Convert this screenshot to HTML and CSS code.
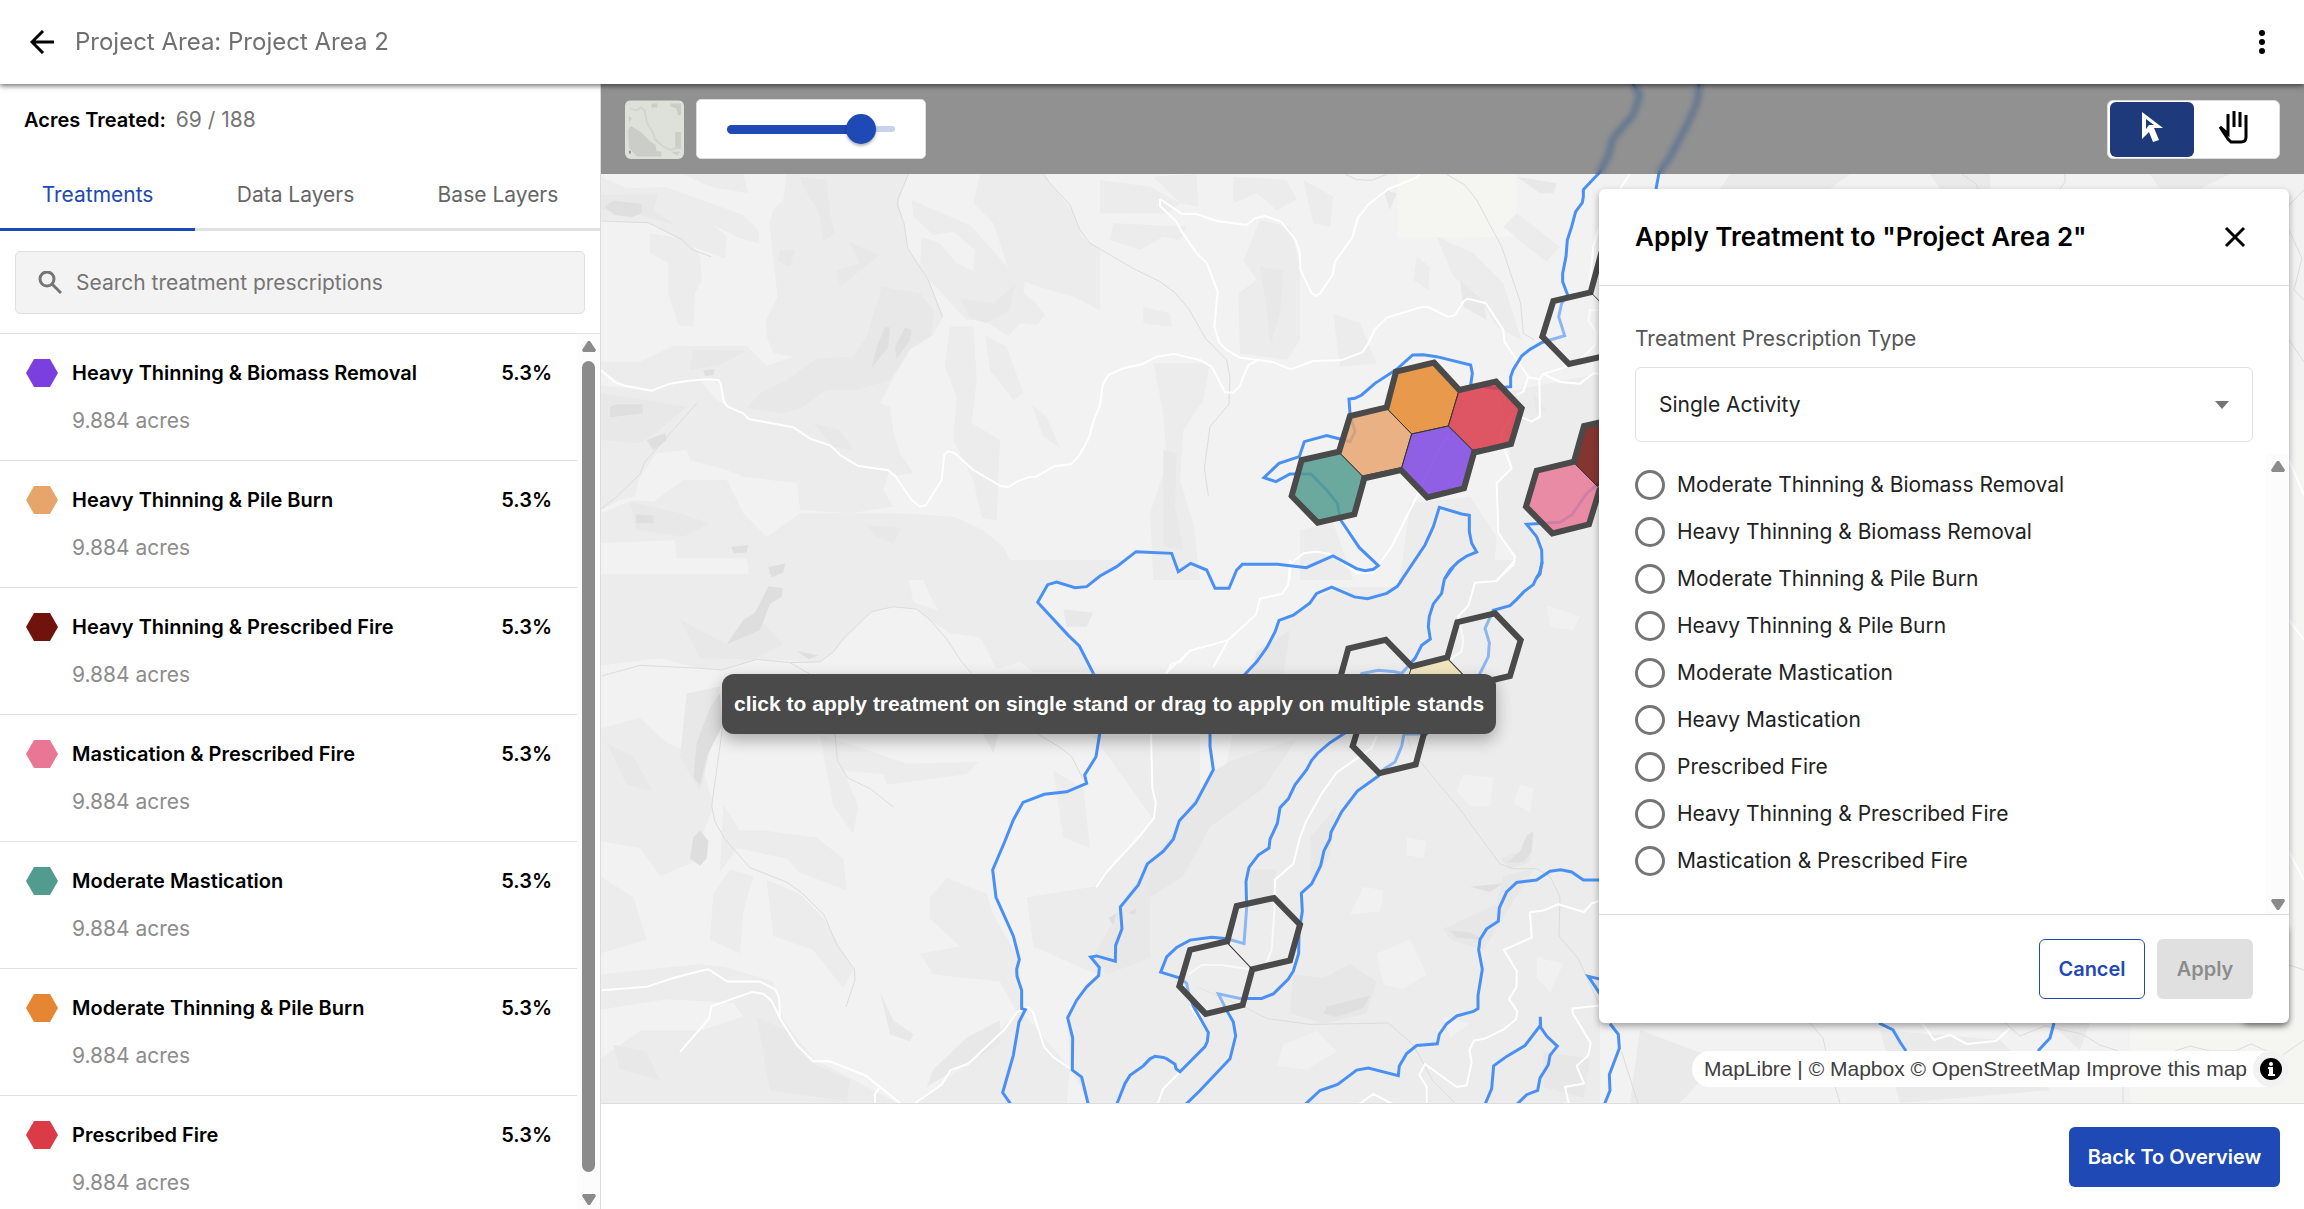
FILE: index.html
```html
<!DOCTYPE html>
<html lang="en">
<head>
<meta charset="utf-8">
<meta name="viewport" content="width=device-width, initial-scale=1">
<title>Project Area 2</title>
<link rel="stylesheet" href="styles.css">
</head>
<body>
<div class="app">
  <header class="topbar">
    <button class="icon-btn" type="button" aria-label="Back"><svg width="24" height="24" viewBox="0 0 24 24" fill="none" stroke="#000" stroke-width="3"><path d="M24 12H2M13 1 2 12l11 11"/></svg></button>
    <h1 class="topbar-title">Project Area: Project Area 2</h1>
    <button class="icon-btn" type="button" aria-label="More options"><svg width="24" height="24" viewBox="0 0 24 24"><circle cx="12" cy="3" r="3"/><circle cx="12" cy="12" r="3"/><circle cx="12" cy="21" r="3"/></svg></button>
  </header>

  <aside class="sidebar">
    <p class="acres"><strong>Acres Treated:</strong> <span>69 / 188</span></p>
    <nav class="tabs">
      <button class="tab tab-active" type="button">Treatments</button>
      <button class="tab" type="button">Data Layers</button>
      <button class="tab" type="button">Base Layers</button>
    </nav>
    <div class="search-area">
      <label class="search">
        <svg width="24" height="24" viewBox="0 0 24 24" fill="none" stroke="#757575" stroke-width="3"><circle cx="9" cy="8" r="7"/><path d="m14 13 9 9"/></svg>
        <input type="text" placeholder="Search treatment prescriptions" aria-label="Search treatment prescriptions">
      </label>
    </div>
    <div class="list-area">
      <ul class="list">
        <li class="item"><svg class="hex purple" viewBox="0 0 32 28"><path d="M8 0h16l8 14-8 14H8L0 14z"/></svg><strong>Heavy Thinning &amp; Biomass Removal</strong><b>5.3%</b><span>9.884 acres</span></li>
        <li class="item"><svg class="hex peach" viewBox="0 0 32 28"><path d="M8 0h16l8 14-8 14H8L0 14z"/></svg><strong>Heavy Thinning &amp; Pile Burn</strong><b>5.3%</b><span>9.884 acres</span></li>
        <li class="item"><svg class="hex maroon" viewBox="0 0 32 28"><path d="M8 0h16l8 14-8 14H8L0 14z"/></svg><strong>Heavy Thinning &amp; Prescribed Fire</strong><b>5.3%</b><span>9.884 acres</span></li>
        <li class="item"><svg class="hex pink" viewBox="0 0 32 28"><path d="M8 0h16l8 14-8 14H8L0 14z"/></svg><strong>Mastication &amp; Prescribed Fire</strong><b>5.3%</b><span>9.884 acres</span></li>
        <li class="item"><svg class="hex teal" viewBox="0 0 32 28"><path d="M8 0h16l8 14-8 14H8L0 14z"/></svg><strong>Moderate Mastication</strong><b>5.3%</b><span>9.884 acres</span></li>
        <li class="item"><svg class="hex orange" viewBox="0 0 32 28"><path d="M8 0h16l8 14-8 14H8L0 14z"/></svg><strong>Moderate Thinning &amp; Pile Burn</strong><b>5.3%</b><span>9.884 acres</span></li>
        <li class="item"><svg class="hex red" viewBox="0 0 32 28"><path d="M8 0h16l8 14-8 14H8L0 14z"/></svg><strong>Prescribed Fire</strong><b>5.3%</b><span>9.884 acres</span></li>
      </ul>
      <div class="scrollbar">
        <svg width="14" height="12" viewBox="0 0 14 12"><path d="M6 1h2l6 9-1 2H1l-1-2z"/></svg>
        <div class="scroll-thumb"></div>
        <svg width="14" height="12" viewBox="0 0 14 12"><path d="M6 11h2l6-9-1-2H1L0 2z"/></svg>
      </div>
    </div>
  </aside>

  <main class="map">
    <svg class="map-canvas" viewBox="601 84 1703 1019" preserveAspectRatio="xMinYMin slice" aria-hidden="true">
      <rect x="601" y="84" width="1703" height="1019" fill="#f2f2f2"/>
      <!-- hillshade -->
      <g transform="translate(600 80) scale(.33333)">
        <g fill="#ececec">
          <path d="M3 290 80 325 200 322 290 355 430 405 475 450 478 490 420 475 340 435 380 470 375 535 280 500 145 428 3 423z"/>
          <path d="M250 283H430L445 340 330 320z"/>
          <path d="M560 283H925L895 365 912 430 923 505 985 600 1030 710 1000 765 930 810 880 895 840 970 870 980 880 1060 900 1120 940 1180 885 1187 865 1171 772 1157 692 1097 580 1042 446 1017 383 980 362 910 320 898 155 932 75 917 3 870V845L120 845 220 798H440L500 858 580 830 520 820 500 770 498 720 518 680 533 650 508 430 520 390 550 360z"/>
          <path d="M1140 283H1332L1420 400 1445 470 1500 510V690L1420 650 1330 625 1275 605 1270 640 1305 665 1335 705 1310 735 1260 730 1225 768 1150 720 1100 720 960 570 965 470 1020 490 1070 550 1120 572 1125 510 1060 455 1000 465 940 410 935 360 980 380 1110 435 1170 500 1225 565 1180 430 1120 370z"/>
          <path d="M150 460 265 480 300 530 305 600 285 640 280 740 235 735 205 640V550L150 520z"/>
          <path d="M3 917 155 932 300 900 350 960 430 1000 580 1042 690 1097 770 1157 870 1171 850 1230 880 1280 750 1300 600 1290 590 1210 430 1190 380 1170 270 1140 260 1110 170 1120 115 1200 105 1250 60 1260 3 1290z"/>
          <path d="M100 1260 160 1265 250 1200 380 1200 430 1300 500 1370 600 1300 900 1300 1060 1310 1150 1350 1210 1400 1260 1500H450L440 1435 230 1435 225 1380 3 1390V1300z"/>
          <path d="M1050 740 1120 740 1130 900 1115 1030 1200 1080 1190 1320 1145 1315 1120 1200 1060 1080 1070 950 1035 860z"/>
          <path d="M1155 765 1220 800 1270 940 1240 960 1170 870zM1295 975 1340 1010 1380 1105 1330 1070z"/>
        </g>
        <g fill="#e8e8e8">
          <path d="M3 345 175 343 160 390 225 435 100 400 3 390zM600 290 680 300 690 400 705 460 670 483 655 390 615 330zM845 620 960 640 1000 690 995 765 930 805 870 900 770 930 680 930 600 985 550 1000 440 985 480 940 560 900 650 835 760 830 800 770zM1080 655 1180 670 1245 615 1230 690 1160 730 1110 715zM280 810 440 812 360 855 270 870zM745 485 840 525 720 620 710 570 780 550z"/>
          <path d="M540 510 585 510 570 560 535 545zM3 940 140 960 260 980 190 1040 120 1090 3 1080zM90 1265 240 1300 330 1330 250 1370 110 1350zM640 1030 720 1050 760 1110 700 1100zM800 1335 905 1345 880 1390 830 1370z"/>
        </g>
        <g fill="#dfdfdf">
          <path d="M12 380 40 362 125 372 125 400 95 412 45 405zM30 980 50 973H128V1000L30 1012zM855 742H870L865 800 815 865 830 800zM915 742 935 750 930 780 890 838 885 800zM140 1080 195 1060 200 1080 160 1110zM108 1303 160 1307V1330H108zM395 1400 445 1395 440 1418 400 1420zM505 1480 555 1450 550 1470 515 1495zM310 870 345 868 340 885 315 888z"/>
        </g>
      </g>
      <g transform="translate(1100 80) scale(.33333)">
        <path d="M893 283H1251V470L893 473z" fill="#f5f5f2"/>
        <g fill="#ececec">
          <path d="M0 300 150 320 240 370 200 400H0zM160 290 290 283 295 380 240 370zM400 290 560 300 590 360 530 390 470 340 400 370zM40 430 260 440 240 480 190 470 120 510 30 480zM480 420 570 440 600 560 600 780 560 840 420 820 415 640 470 600 430 540zM610 300 700 350 690 440 640 430zM1250 400 1380 500 1340 545 1280 500 1210 440zM1010 470 1120 520 1210 610 1265 780 1190 740 1130 640 1060 590zM950 530 990 560 985 630 940 600zM130 680 210 700 215 740 130 730zM160 850H330L310 960 250 1050 240 1200 280 1330 300 1500H160L150 1300 200 1150 190 1000zM700 700 780 730 830 850 720 860zM1200 940 1500 880V1500H1190L1245 1430 1190 1360 1190 1210 1235 1165zM600 1350 700 1330 760 1500H600zM930 1270 1110 1250 1190 1370 1180 1500H900z"/>
        </g>
        <g fill="#e8e8e8"><path d="M480 560 550 570 540 700 510 800 500 680zM1250 290 1370 310 1360 340 1320 340zM190 1110 230 1120 225 1280 250 1410 190 1400zM1080 600 1150 660 1160 720 1090 680zM1300 940 1340 990 1310 1000zM850 330 890 340 870 390z"/></g>
      </g>
      <g transform="translate(700 560) scale(.33333 .3513)">
        <g fill="#ececec">
          <path d="M-300 40H460L480 50 620 30 640 120 740 150 760 215 690 170 650 140 580 133 515 147 400 262 360 290 170 283 65 313 0 308-120 280-300 300zM640 0H1280L1160 78 1057 62 1012 121 1138 245 1180 320H1000L960 290 890 310 840 220 760 210 700 120zM360 500 470 530 620 580 835 575 800 610 560 640 550 610 430 600 475 700 460 780 400 700zM70 695 120 770 190 770 350 790 430 850 440 940 300 890 260 850 110 820 60 890zM90 880 160 900 130 1000 120 1120 30 1080 40 950zM200 910 300 950 370 1020 460 1165 430 1220 340 1110 220 1070zM0 1150 80 1160 220 1200 250 1310 340 1420 600 1550H-300V1420L-180 1340 0 1340 130 1300 100 1260-100 1250-300 1280V1180zM690 960 740 905 860 950 880 1010 960 1140 960 1280 1110 1447 1100 1550H640L800 1434 950 1288 900 1200 700 1180 660 1120 780 1100 690 1020zM1060 600 1150 650 1170 820 1090 790zM1180 500H1500V1550H1170L1110 1447 1100 1300 1190 1180 1000 1100 980 960 1180 930 1360 740z"/>
          <path d="M-300 480-180 450-100 520 0 560 40 700-20 860-120 900-180 820-300 800zM-300 900-200 960-160 1080-300 1120z"/>
        </g>
        <g fill="#e8e8e8"><path d="M-60 170 80 240 180 170 250 240 160 283 0 280zM1500 740 1420 800 1340 870 1260 990 1180 1130 1220 1180 1500 1080zM900 1310 800 1360 700 1450 680 1500 820 1420 900 1380zM170 1300 260 1340 330 1430 450 1480 440 1540 210 1510zM540 1230 580 1310 640 1350 630 1370 570 1350zM-40 380 60 360 40 500 0 660-60 560zM840 480 900 480 880 550zM1090 140 1180 150 1160 190 1100 190zM-280 520-200 560-140 660-220 640zM-260 1380-160 1400-120 1480-240 1450z"/></g>
        <g fill="#dedede"><path d="M205 75 248 80 245 105 210 125 180 200 80 240 130 170 165 150zM205 20 255 10 250 35 215 50zM290 258 355 272 325 282zM60 380 68 470 20 560 0 640-20 620-10 520 30 420zM-20 790 0 770 25 800 20 850 0 870-30 850zM1225 1020 1250 1005 1240 1040zM1285 1005 1310 990 1305 1010z"/></g>
      </g>
      <g transform="translate(1150 560) scale(.33333 .3513)">
        <path d="M800 0H1350V1550H0V860L200 700 290 323 400 170 560 77 740 77z" fill="#ececec"/>
        <g fill="#f1f1f1"><path d="M940 610 1030 620 1020 700 960 700 920 660zM1110 640 1150 650 1140 720 1090 690zM640 930 700 940 690 1000 600 1010zM680 1120 780 1080 830 1180 760 1220 700 1210zM400 1380 500 1340 560 1400 470 1450 380 1440zM1190 130 1290 160 1270 200 1200 190zM770 790 830 800 820 850 770 840zM880 1300 960 1320 900 1360zM1160 1130 1240 1150 1200 1230 1160 1190z"/></g>
        <g fill="#e7e7e7"><path d="M320 260 420 200 400 330 300 330zM250 570 440 510 340 650 180 760 100 900 0 960V870L90 742 190 600zM300 880 380 880 360 1000 300 1000zM480 790 560 700 540 840 480 940zM880 1050 1040 980 1060 900 1150 880 1000 1110 900 1080zM430 1180 520 1190 600 1150 680 1200 650 1290 520 1320 420 1290zM1050 850 1110 830 1150 770 1140 860 1080 880zM1180 1400 1320 1420 1300 1530 1180 1500z"/></g>
        <path d="M1130 785 1150 772 1145 830 1120 860 1070 862 1110 830zM530 1272 660 1240 640 1275 560 1300 520 1292zM960 930 1060 920 1020 945zM900 1055 960 1060 1000 1080 920 1075z" fill="#dfdfdf"/>
      </g>
      <path d="M2130 1023H2304V1103H2130zM2289 400H2304V1023H2289z" fill="#f5f5f2"/>
      <path d="M1730 174H1850L1830 189H1720zM1930 174H1990V189H1940zM2150 174H2230L2200 189H2160zM1640 1030 1720 1060 1680 1103H1630zM1880 1030 2000 1040 2050 1090 1900 1103zM2050 1023H2090L2080 1050z" fill="#eaeaea"/>

      <!-- trails -->
      <g class="trail">
        <path transform="translate(600 80) scale(.33333)" d="M3 423 145 428 245 478 278 510 333 530M925 283 895 355 892 375 912 430 923 505 985 600 1027 710M1332 283 1350 310 1410 375 1440 450 1470 490 1500 507M290 970 135 1145 120 1182 50 1250 3 1287"/>
        <path transform="translate(1100 80) scale(.33333)" d="M0 507 95 563 180 605 225 638 265 685 318 777 380 840 390 890 387 972 330 1040 313 1165 325 1247M737 283 770 299 815 301 860 283M1040 283 1095 315 1130 360 1205 500 1262 670 1270 760 1303 780"/>
        <path transform="translate(700 560) scale(.33333 .3513)" d="M-295 330-180 300 0 308 65 313 170 283 270 292 360 290 400 262 430 222 515 147 580 133 650 140 690 170 740 225 785 290 815 323M270 292 330 325M68 475 35 700 45 745 75 795 150 876 260 917 305 947 372 1010 410 1095 463 1165 465 1195 438 1272M405 495 412 570 443 620 512 652 580 703M1012 495 1075 530 1115 560 1150 625"/>
        <path transform="translate(1150 560) scale(.33333 .3513)" d="M770 500 790 550 930 710 1050 865 1090 879 1160 879 1200 900 1230 960 1227 1070 1285 1135 1347 1265M140 1215 280 1270 350 1305 480 1322 715 1318 790 1380 850 1485 920 1550M1415 1400 1465 1550"/>
        <path d="M1810 1023 1823 1038 1830 1070 1840 1103M2005 1023 2020 1036 2045 1026 2082 1034 2100 1045 2118 1051M2175 1051 2190 1046 2210 1051 2235 1051 2251 1044 2280 1057 2304 1040M2123 1087V1103M2289 205 2304 190M2289 340 2304 362M2289 965 2304 970M2289 230 2302 258 2294 290 2304 300M1962 174 1976 184 1978 189M2065 174V182L2060 189"/>
      </g>
      <!-- roads -->
      <g class="road">
        <path transform="translate(600 80) scale(.33333)" d="M3 870 45 907 75 917 155 932 210 911 265 902 320 898 355 900 362 910 371 965 383 980 430 1000 446 1017 580 1042 632 1077 692 1097 720 1125 772 1157 865 1171 885 1187 935 1260 960 1280 978 1275 1025 1200 1033 1125 1043 1114 1063 1119 1120 1170 1200 1217 1225 1222 1250 1205 1285 1192 1308 1190 1365 1158 1413 1153 1437 1128 1467 1073 1480 1025 1500 975"/>
        <path transform="translate(1100 80) scale(.33333)" d="M0 975 8 915 25 885 70 865 128 852 170 830 222 822 300 840 335 860 375 937 400 938 418 920 445 855 470 843M180 357 180 378 230 425 245 455 290 520 320 548 353 635 343 740 358 788 380 810 420 833 515 845 573 868 640 843 722 841 787 817 805 790 825 748 860 713 965 681 985 681 1045 711 1065 705 1090 665 1103 656 1158 670 1210 750 1213 785 1285 890 1270 935 1250 945M180 357 245 401 290 402 350 423 440 435 465 415 495 408 543 425 587 480 600 520 601 568 635 640 648 648 660 640 698 585 705 545 757 472 773 415 805 373 865 327 950 293 960 283M1500 690 1470 690 1465 720 1487 755 1485 795 1430 850 1330 882 1380 906 1440 911 1480 880 1500 882M1285 892 1318 898 1320 1010 1295 1025 1240 1000 1200 1070 1235 1165 1190 1210 1195 1360 1245 1430 1240 1455 1190 1500M1328 882 1318 900M1050 1060 1010 1120 950 1250 875 1400 835 1455 820 1480 770 1478 690 1422 650 1415 610 1420 572 1452 568 1500M1497 440 1480 500 1470 600"/>
        <path transform="translate(700 560) scale(.33333 .3513)" d="M-295 1225-160 1215-80 1190 0 1170 25 1165 82 1200 180 1200 225 1222 237 1245 240 1305 290 1380 340 1427 390 1427 498 1468 605 1550M-60 1400 0 1335 27 1305 35 1270 155 1230 190 1235 215 1255 240 1305M540 1500 525 1520V1550M640 1550 725 1493 752 1452 805 1434 915 1335 950 1288 985 1273 1000 1290 1032 1385 1060 1415 1110 1447M1353 495 1357 650 1367 690 1362 735 1320 785 1220 888 1188 932M1353 495 1370 400 1400 320 1415 295 1440 290 1470 258 1500 250"/>
        <path transform="translate(1150 560) scale(.33333 .3513)" d="M420 0 415 70 395 97 330 110 318 155 235 228 120 258 50 320M235 228 190 305M680 500 665 535 560 605 515 665 468 745 450 790 430 865 375 910 373 1000 365 1110 350 1145M1095 0 1040 60 975 65 955 130 925 160 940 230 935 260 890 290M115 1180 155 1153 215 1153 300 1165M1350 970 1325 978 1302 1002 1225 980 1180 998 1140 1003 1145 1075 1062 1110 1100 1170 1100 1215 1077 1250 1102 1285 1098 1307 1060 1337 1003 1363 972 1368 958 1395 965 1430 950 1495 920 1500 825 1435 808 1465 830 1500V1550M1350 1268 1268 1277V1290L1322 1375 1315 1410 1280 1440 1302 1490 1245 1500 1257 1550M90 1457 40 1505 22 1550M625 1550 670 1520 730 1550M175 1345 120 1270"/>
        <path d="M1922 1023 1934 1040 1950 1035 1967 1044 1996 1041 2010 1028M1630 174 1620 189M2289 852 2304 880M2289 620 2304 640M2289 460 2304 495"/>
      </g>
      <!-- project boundaries -->
      <g class="boundary">
        <path d="M1633 84 1640 95 1633 115 1613 138 1608 157 1599 173 1583 190M1699 84 1698 100 1688 123 1670 157 1659 173 1656 189M1879 1023 1893 1030 1900 1042 1906 1051M2054 1023 2050 1038 2038 1051"/>
        <path transform="translate(1100 80) scale(.33333)" d="M1450 328V350L1447 368 1427 395 1415 440 1402 480 1398 530 1388 580V605L1403 645 1385 670 1376 710 1394 767 1350 780 1325 788 1290 808 1265 828 1240 868 1232 890V920L1185 925 1112 915 1117 880 1112 855 1010 830 970 824 938 825 890 868 825 910 785 945 765 955 747 957 750 1000 765 1055 750 1085 720 1077 680 1067 613 1085 598 1130 537 1150 492 1193 528 1205 570 1182H633L680 1230 712 1270 722 1320 778 1403 835 1457 820 1468 795 1472 770 1466 699 1428 619 1463 533 1453H427L410 1470 387 1525H345L320 1470 272 1450 235 1475 215 1420 108 1415 50 1460 0 1488-40 1520-75 1523-130 1506-157 1514-187 1567-95 1666-62 1698-20 1780"/>
        <path transform="translate(1100 80) scale(.33333)" d="M900 1507 975 1395 1000 1340 1018 1282 1085 1302 1108 1306V1355L1115 1390 1130 1416 1100 1428 1075 1445 1050 1470 1033 1498M1500 1207 1460 1240 1415 1305 1380 1327 1280 1333 1310 1370 1325 1410 1326 1450 1318 1480 1308 1496"/>
        <path transform="translate(700 560) scale(.33333 .3513)" d="M1180 323 1220 400 1199 495 1188 560 1154 612 1160 636 1100 660 1033 667 969 690 940 740 915 800 878 882 888 960 940 1070 958 1137 950 1165 951 1185 965 1225V1277L976 1280 957 1315 940 1410 908 1516 933 1550M1393 827 1342 865 1315 925 1261 988 1266 1050 1247 1097 1246 1142 1190 1127 1172 1130 1198 1160 1196 1183 1160 1215 1130 1253 1103 1303 1118 1360 1117 1452 1145 1472 1165 1550M1395 1417 1365 1413 1350 1420 1330 1440 1290 1467 1275 1490 1250 1550"/>
        <g transform="translate(1150 560) scale(.33333 .3513)">
          <path d="M753 60 742 75 710 95 653 110 613 105 545 77 500 95 480 122 430 157 387 172 375 205 350 250 320 290 287 323 180 440V530L190 597 137 692 88 742 70 795 42 827"/>
          <path d="M883 55 875 95 850 125 838 160 835 190 841 225 815 243 795 280 755 323 735 318 685 314 635 323 600 400 640 460 580 495 540 520 503 550 485 570 470 597 435 640 415 680 390 705 382 750 360 795 357 820 325 840 297 875 288 915 290 990 282 1092 232 1078 185 1074 120 1082 80 1103 50 1130 32 1173 90 1190 110 1205 115 1230 130 1270 175 1345 172 1370 165 1385 90 1457 78 1448 75 1435 45 1417"/>
          <path d="M1158 53 1150 70 1122 90 1100 112 1080 130 1030 143 1005 195 1018 235 1015 275 990 323 830 495H762L755 530 735 575 705 593 685 615 622 658 575 717 543 775 540 795 522 828 512 870 485 922 454 948 457 1000 447 1060 446 1120 430 1170 415 1193 370 1235 335 1248H270L205 1235 232 1285 250 1315 257 1355 240 1420 150 1510 107 1550"/>
          <path d="M465 1550 510 1510 563 1493 620 1452 655 1446 745 1468 748 1440 770 1405 800 1382 862 1377 868 1350 890 1320 920 1298 970 1285 984 1277V1240L997 1165 986 1110 990 1080 1010 1050 1045 1028 1048 990 1070 945 1100 918 1160 911 1200 886 1232 882 1265 888 1300 911H1350M1005 1550 1025 1505 1031 1440 1070 1413 1125 1382 1171 1325V1300L1172 1330 1190 1355 1222 1384 1200 1410 1195 1437 1170 1475 1163 1510 1130 1522 1100 1550M1350 1193 1315 1185 1350 1235M1380 1320 1405 1350 1408 1390 1378 1465 1380 1510 1363 1550M1158 53 1170 40 1176 5M883 55 910 20"/>
        </g>
      </g>
      <!-- treatment stands -->
      <g transform="translate(1100 80) scale(.33333)">
        <g fill-opacity=".85" stroke="#333" stroke-width="3">
          <path fill="#e68a2e" d="M888 875 1002 848 1075 938 1045 1038 935 1062 863 988z"/>
          <path fill="#db3b4a" d="M1075 938 1188 905 1265 985 1233 1092 1117 1110 1045 1038z"/>
          <path fill="#e7a671" d="M750 1008 863 988 935 1062 905 1163 787 1188 720 1120z"/>
          <path fill="#549c91" d="M605 1140 720 1120 787 1188 763 1303 653 1328 575 1248z"/>
          <path fill="#7e46e0" d="M1045 1038 1117 1110 1092 1225 982 1252 905 1163 935 1062z"/>
          <path fill="#e97a98" d="M1310 1172 1424 1150 1490 1217 1500 1225 1467 1333 1357 1360 1278 1280z"/>
          <path fill="#72150f" d="M1452 1038 1565 1012V1217H1490L1424 1150z"/>
        </g>
        <path fill="#f1f1f1" fill-opacity=".4" d="M1505 515 1472 637 1360 663 1327 770 1407 852 1520 827z"/>
        <path class="stand" d="M888 875 1002 848 1078 930 1188 905 1265 985 1233 1092 1122 1118 1092 1225 982 1252 903 1170 793 1195 763 1303 653 1328 575 1248 605 1140 717 1115 750 1008 860 982zM1565 1012 1452 1038 1422 1145 1310 1172 1278 1280 1357 1360 1467 1333 1500 1225M1505 515 1472 637 1360 663 1327 770 1407 852 1520 827"/>
        <path d="M1472 637 1510 675" stroke="#333" stroke-width="3"/>
      </g>
      <g transform="translate(1150 560) scale(.33333 .3513)">
        <g fill="#f1f1f1" fill-opacity=".4"><path d="M565 355 595 252 707 227 785 303 770 400H600zM892 277 922 177 1035 152 1112 228 1080 330 968 355zM640 430 608 530 688 607 797 582 840 430zM260 985 372 962 450 1038 420 1140 307 1165 278 1267 167 1292 88 1213 120 1110 232 1085z"/></g>
        <path d="M785 303 892 280 968 355 940 420 800 420 770 350z" fill="#f2e6c0" stroke="#333" stroke-width="3"/>
        <path class="stand" d="M600 400 565 355 595 252 707 227 785 303 892 277 922 177 1035 152 1112 228 1080 330 968 355M640 430 608 530 688 607 797 582 840 430M260 985 372 962 450 1038 420 1140 307 1165 278 1267 167 1292 88 1213 120 1110 232 1085z"/>
        <path d="M232 1090 307 1165" stroke="#333" stroke-width="3"/>
      </g>
    </svg>

    <div class="map-toolbar">
      <button class="basemap" type="button" aria-label="Base map">
        <svg viewBox="0 0 60 60" width="60" height="60"><rect width="60" height="60" fill="#dee0da"/><g fill="#cacdc8"><path d="M3 30 6 26 11 29 16 32 21 37 26 42 31 45 32 51 37 52V57H12L4 48zM51 32h6v17h-6zM27 3h6v4h-6zM46 3h11v12h-3l-2-7-6-2zM47 52h9l-3 4zM4 16l3 2-3 5z"/></g><path d="M5 8 12 10 16 7 20 10 22 22 28 32 31 40 39 47 46 50 55 48" fill="none" stroke="#d2d4cf" stroke-width="2"/><path d="M4 51h2v3H4z" fill="#8b969c"/></svg>
      </button>
      <div class="slider"><input type="range" min="0" max="100" value="80" aria-label="Opacity"></div>
      <div class="mode">
        <button class="mode-btn mode-on" type="button" aria-label="Select"><svg width="36" height="36" viewBox="0 0 36 36"><path d="M8 1v27l7-7 4 10 6-2-5-12h9z" fill="#fff"/><path d="M12 8v10l3-4h5z" fill="#1e3a7a"/></svg></button>
        <button class="mode-btn" type="button" aria-label="Pan"><svg width="36" height="36" viewBox="0 0 36 36" fill="none" stroke="#000" stroke-width="3"><path d="M11 3v20L3 16l8 12 3 3h10q5 0 5-5V4M17 0v16M23 1v15"/></svg></button>
      </div>
    </div>

    <div class="tooltip" role="tooltip">click to apply treatment on single stand or drag to apply on multiple stands</div>

    <div class="map-nav"></div>

    <section class="panel">
      <header class="panel-head">
        <h2>Apply Treatment to "Project Area 2"</h2>
        <button class="icon-btn close" type="button" aria-label="Close"><svg width="22" height="22" viewBox="0 0 22 22" stroke="#000" stroke-width="3"><path d="m2 2 18 18M20 2 2 20"/></svg></button>
      </header>
      <div class="panel-body">
        <label class="field-label" for="rx-type">Treatment Prescription Type</label>
        <div class="select-wrap">
          <select id="rx-type"><option>Single Activity</option></select>
          <svg width="14" height="8" viewBox="0 0 14 8"><path d="M0 0h14L7 8z" fill="#757575"/></svg>
        </div>
      </div>
      <div class="options-area">
        <div class="options">
          <label><input type="radio" name="rx">Moderate Thinning &amp; Biomass Removal</label>
          <label><input type="radio" name="rx">Heavy Thinning &amp; Biomass Removal</label>
          <label><input type="radio" name="rx">Moderate Thinning &amp; Pile Burn</label>
          <label><input type="radio" name="rx">Heavy Thinning &amp; Pile Burn</label>
          <label><input type="radio" name="rx">Moderate Mastication</label>
          <label><input type="radio" name="rx">Heavy Mastication</label>
          <label><input type="radio" name="rx">Prescribed Fire</label>
          <label><input type="radio" name="rx">Heavy Thinning &amp; Prescribed Fire</label>
          <label><input type="radio" name="rx">Mastication &amp; Prescribed Fire</label>
        </div>
        <div class="scrollbar">
          <svg width="14" height="12" viewBox="0 0 14 12"><path d="M6 1h2l6 9-1 2H1l-1-2z"/></svg>
          <svg width="14" height="12" viewBox="0 0 14 12"><path d="M6 11h2l6-9-1-2H1L0 2z"/></svg>
        </div>
      </div>
      <footer class="panel-foot">
        <button class="btn btn-outline" type="button">Cancel</button>
        <button class="btn btn-disabled" type="button" disabled>Apply</button>
      </footer>
    </section>

    <div class="attribution">
      <span><a href="#">MapLibre</a> | <a href="#">© Mapbox</a> <a href="#">© OpenStreetMap</a> <a href="#">Improve this map</a></span>
      <button class="info" type="button" aria-label="Toggle attribution"><svg width="22" height="22" viewBox="0 0 22 22"><circle cx="11" cy="11" r="11"/><circle cx="11" cy="6" r="2" fill="#fff"/><path d="M8 9h5v7h2v2H8v-2h1v-5H8z" fill="#fff"/></svg></button>
    </div>
  </main>

  <footer class="bottombar">
    <button class="btn btn-primary" type="button">Back To Overview</button>
  </footer>
</div>
</body>
</html>
```
FILE: styles.css
```css
* { box-sizing: border-box; }

body {
  margin: 0;
  font: 21px/28px Inter, "Noto Sans", sans-serif;
  color: #222;
  background: #fff;
}

h1, h2, p, ul { margin: 0; padding: 0; }

button, input, select { font: inherit; color: inherit; margin: 0; }

button { padding: 0; border: 0; background: none; }

.app {
  display: grid;
  grid-template: 84px minmax(0, 1fr) 105px / 601px minmax(0, 1fr);
  height: 100vh;
}

/* top bar */
.topbar {
  grid-column: 1 / -1;
  display: flex;
  align-items: center;
  padding: 0 30px;
  background: #fff;
  box-shadow: 0 2px 5px rgba(0, 0, 0, .55);
  z-index: 3;
}
.topbar-title {
  flex: 1;
  padding-left: 21px;
  font-size: 24px;
  font-weight: 400;
  color: #707070;
}
.icon-btn { display: flex; }

/* sidebar */
.sidebar {
  grid-row: 2 / 4;
  display: flex;
  flex-direction: column;
  min-height: 0;
  border-right: 1px solid #dcdcdc;
}
.acres { padding: 22px 24px 0; color: #757575; }
.acres strong { margin-right: 4px; font-size: 20px; font-weight: 600; color: #000; }
.tabs {
  display: flex;
  margin-top: 28px;
  border-bottom: 3px solid #e0e0e0;
}
.tab {
  flex: 1 1 auto;
  height: 69px;
  margin-bottom: -3px;
  border-bottom: 3px solid transparent;
  color: #666;
}
.tab-active { color: #1f49b4; border-color: #1f49b4; }
.search-area { padding: 20px 15px 19px; border-bottom: 1px solid #e0e0e0; }
.search {
  display: flex;
  align-items: center;
  gap: 14px;
  height: 63px;
  padding: 0 22px;
  border: 1px solid #e0e0e0;
  border-radius: 5px;
  background: #f3f3f3;
}
.search input {
  flex: 1;
  padding: 0;
  border: 0;
  outline: 0;
  background: none;
}
.search input::placeholder { color: #757575; opacity: 1; }
.list-area { flex: 1; display: flex; min-height: 0; overflow: hidden; }
.list { flex: 1; list-style: none; }
.item {
  display: grid;
  grid-template-columns: 32px 1fr auto;
  gap: 20px 14px;
  align-items: center;
  height: 127px;
  padding: 0 25px 0 26px;
  align-content: center;
  border-bottom: 1px solid #e0e0e0;
  color: #8c8c8c;
}
.item strong, .item b { font-size: 20px; font-weight: 600; color: #000; }
.item span { grid-column: 2; }
.hex { width: 32px; height: 28px; }
.purple { fill: #7b3fe0; }
.peach { fill: #e7a56b; }
.maroon { fill: #6f130c; }
.pink { fill: #e97695; }
.teal { fill: #519b8f; }
.orange { fill: #e68632; }
.red { fill: #da3b47; }

.scrollbar {
  display: flex;
  flex-direction: column;
  align-items: center;
  justify-content: space-between;
  width: 23px;
  padding: 6px 0 3px;
  background: #fcfcfc;
  fill: #8b8b8b;
}
.scroll-thumb {
  flex: 1;
  width: 13px;
  margin: 9px 0 22px;
  border-radius: 7px;
  background: #8b8b8b;
}

/* map */
.map {
  position: relative;
  overflow: hidden;
  border-bottom: 1px solid #ddd;
}
.map-canvas { position: absolute; inset: 0; width: 100%; height: 100%; }
.trail { fill: none; stroke: #dadddb; stroke-width: 1px; }
.road { fill: none; stroke: #fff; stroke-width: 2px; stroke-linejoin: round; }
.boundary { fill: none; stroke: #4a90f3; stroke-width: 3px; }
.stand { fill: none; stroke: #4a4a4a; stroke-width: 6px; }
.trail path, .road path, .boundary path, .stand { vector-effect: non-scaling-stroke; }

.map-toolbar {
  position: absolute;
  inset: 0 0 auto;
  display: flex;
  align-items: center;
  gap: 12px;
  height: 90px;
  padding: 0 24px;
  background: rgba(0, 0, 0, .4);
  backdrop-filter: blur(3px);
}
.basemap {
  display: flex;
  width: 59px;
  height: 59px;
  border-radius: 6px;
  overflow: hidden;
}
.slider {
  position: relative;
  width: 230px;
  height: 60px;
  padding: 0 16px;
  border: 1px solid #ddd;
  border-radius: 5px;
  background: #fff;
}
.slider::before, .slider::after {
  content: "";
  position: absolute;
  left: 30px;
  border-radius: 5px;
}
.slider::before { top: 26px; width: 168px; height: 6px; background: #c9d2ec; }
.slider::after { top: 25px; width: 134px; height: 9px; background: #1f49b4; }
.slider input {
  position: relative;
  z-index: 1;
  width: 198px;
  height: 58px;
  margin-left: -1px;
  background: none;
  appearance: none;
}
.slider input::-webkit-slider-thumb {
  appearance: none;
  width: 30px;
  height: 30px;
  border-radius: 50%;
  background: #1f49b4;
  box-shadow: 0 2px 3px rgba(0, 0, 0, .3);
}
.mode {
  display: flex;
  width: 173px;
  height: 59px;
  margin-left: auto;
  padding: 1px 2px;
  border: 1px solid #ddd;
  border-radius: 6px;
  background: #fff;
}
.mode-btn {
  flex: 1;
  display: flex;
  align-items: center;
  justify-content: center;
  border-radius: 6px;
}
.mode-on { background: #1e3a7a; }

.tooltip {
  position: absolute;
  left: 121px;
  top: 590px;
  padding: 16px 12px;
  border-radius: 12px;
  background: #4a4a4a;
  color: #fff;
  font: bold 21px/28px "Liberation Sans", Arial, sans-serif;
  box-shadow: 0 6px 16px rgba(0, 0, 0, .3);
  white-space: nowrap;
}

.map-nav {
  position: absolute;
  right: 16px;
  top: 840px;
  width: 46px;
  height: 98px;
  border-radius: 6px;
  background: #fff;
  box-shadow: 0 3px 6px rgba(0, 0, 0, .4);
}

/* treatment panel */
.panel {
  position: absolute;
  top: 105px;
  right: 15px;
  width: 690px;
  border-radius: 6px;
  background: #fff;
  box-shadow: 0 3px 7px rgba(0, 0, 0, .35);
}
.panel-head {
  display: flex;
  align-items: center;
  justify-content: space-between;
  height: 97px;
  padding: 0 43px 0 36px;
  border-bottom: 1px solid #ddd;
}
.panel-head h2 { font-size: 26px; font-weight: 600; color: #000; }
.panel-body { padding: 39px 36px 0; }
.field-label { display: block; color: #555; }
.select-wrap { display: grid; align-items: center; margin-top: 14px; }
.select-wrap select {
  grid-area: 1 / 1;
  height: 75px;
  padding: 0 23px;
  border: 1px solid #e0e0e0;
  border-radius: 6px;
  background: #fff;
  appearance: none;
}
.select-wrap svg { grid-area: 1 / 1; justify-self: end; margin-right: 24px; pointer-events: none; }
.options-area { display: flex; margin-top: 12px; }
.options {
  flex: 1;
  display: grid;
  grid-auto-rows: 47px;
  padding: 7px 0 30px 36px;
}
.options label { display: flex; align-items: center; gap: 12px; }
.options input {
  width: 30px;
  height: 30px;
  border: 3px solid #757575;
  border-radius: 50%;
  appearance: none;
}
.panel-foot {
  display: flex;
  justify-content: flex-end;
  gap: 12px;
  padding: 24px 36px;
  border-top: 1px solid #ddd;
}
.btn { height: 60px; border-radius: 6px; font-size: 20px; font-weight: 600; }
.btn-outline { width: 106px; border: 1px solid #1f49b4; color: #1f49b4; }
.btn-disabled { width: 96px; background: #e0e0e0; color: #8c8c8c; }
.btn-primary { width: 211px; background: #1f49b4; color: #fff; }

.attribution {
  position: absolute;
  right: 15px;
  bottom: 16px;
  display: flex;
  align-items: center;
  gap: 6px;
  height: 36px;
  padding-left: 12px;
  border-radius: 18px;
  background: #fff;
  color: #404040;
  font: 21px/34px "Liberation Sans", Arial, sans-serif;
}
.attribution a { color: inherit; text-decoration: none; }
.info {
  display: flex;
  align-items: center;
  justify-content: center;
  width: 36px;
  height: 36px;
  border-radius: 50%;
  background: #f2f2f2;
}

/* bottom bar */
.bottombar {
  display: flex;
  align-items: center;
  justify-content: flex-end;
  padding: 0 24px;
}
```
